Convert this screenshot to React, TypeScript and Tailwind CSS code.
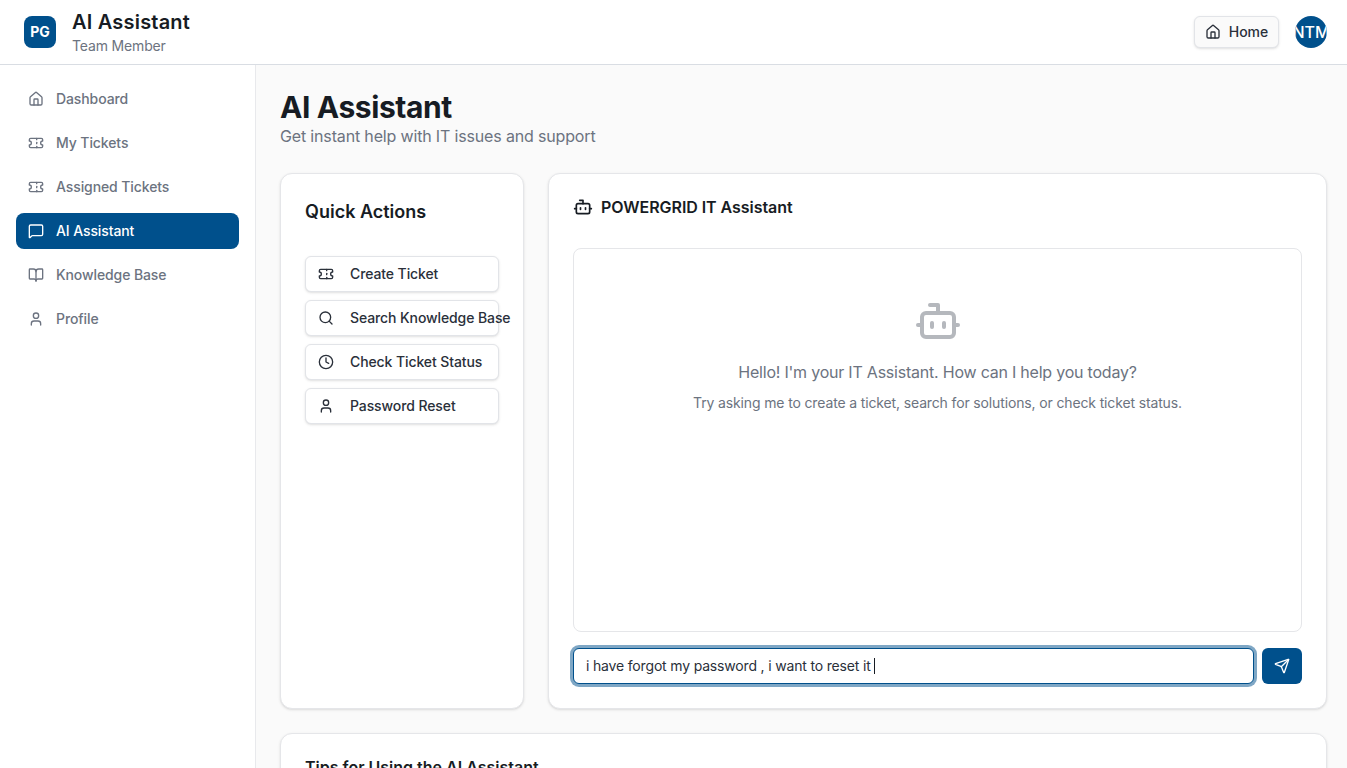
import { Home, Ticket, MessageSquare, BookOpen, User, Search, Clock, Bot, Send } from "lucide-react";

const navItems = [
  { label: "Dashboard", icon: Home },
  { label: "My Tickets", icon: Ticket },
  { label: "Assigned Tickets", icon: Ticket },
  { label: "AI Assistant", icon: MessageSquare, active: true },
  { label: "Knowledge Base", icon: BookOpen },
  { label: "Profile", icon: User },
];

const quickActions = [
  { label: "Create Ticket", icon: Ticket },
  { label: "Search Knowledge Base", icon: Search },
  { label: "Check Ticket Status", icon: Clock },
  { label: "Password Reset", icon: User },
];

export default function App() {
  return (
    <div className="h-screen overflow-hidden flex flex-col bg-[#fafafa] text-[#171c23] font-['Inter',sans-serif]">
      <header className="h-[65px] shrink-0 flex items-center justify-between bg-white border-b border-[#d9dde3] pr-5 pl-6">
        <div className="flex items-center gap-4">
          <div className="w-8 h-8 rounded-lg bg-[#00508c] text-white flex items-center justify-center text-sm font-bold">
            PG
          </div>
          <div>
            <h1 className="text-xl leading-7 font-semibold tracking-[0.2px]">AI Assistant</h1>
            <p className="text-sm leading-5 text-[#6c7380] tracking-[-0.15px]">Team Member</p>
          </div>
        </div>
        <div className="flex items-center gap-4">
          <button className="w-[85px] h-8 flex items-center justify-center gap-2 rounded-md border border-[#e2e4e8] bg-[#fafafa] shadow-sm text-sm font-medium text-[#2a303a]">
            <Home size={16} />
            Home
          </button>
          <div className="w-8 h-8 rounded-full bg-[#00508c] text-white flex items-center justify-center overflow-hidden text-base font-medium whitespace-nowrap">
            NTM
          </div>
        </div>
      </header>

      <div className="flex flex-1 min-h-0">
        <aside className="w-[256px] shrink-0 bg-white border-r border-[#e8e9ec] p-4 flex flex-col gap-2">
          {navItems.map((item) => (
            <div
              key={item.label}
              className={
                item.active
                  ? "h-9 flex items-center gap-3 px-3 rounded-lg bg-[#00508c] text-white text-sm font-medium tracking-[-0.1px]"
                  : "h-9 flex items-center gap-3 px-3 rounded-lg text-[#6c7380] text-sm font-medium tracking-[-0.1px]"
              }
            >
              <item.icon size={16} />
              {item.label}
            </div>
          ))}
        </aside>

        <main className="flex-1 min-w-0 pt-6 pl-6 pr-5">
          <h2 className="text-3xl leading-9 font-bold tracking-[-0.4px]">AI Assistant</h2>
          <p className="text-base leading-[22px] text-[#6c7380] tracking-[-0.16px]">Get instant help with IT issues and support</p>

          <div className="grid grid-cols-[244px_1fr] gap-6 mt-[26px]">
            <div className="h-[536px] rounded-xl border border-[#e5e6e9] bg-white shadow-sm p-6">
              <h3 className="text-lg leading-7 font-semibold">Quick Actions</h3>
              <div className="flex flex-col gap-2 mt-[30px]">
                {quickActions.map((action) => (
                  <button
                    key={action.label}
                    className="w-[194px] h-9 flex items-center gap-4 pl-3 rounded-md border border-[#e2e4e8] bg-white shadow-sm text-sm font-medium text-[#2a303a] whitespace-nowrap tracking-[-0.1px]"
                  >
                    <action.icon size={16} className="shrink-0" />
                    {action.label}
                  </button>
                ))}
              </div>
            </div>

            <div className="h-[536px] rounded-xl border border-[#e5e6e9] bg-white shadow-sm p-6 flex flex-col">
              <div className="flex items-center gap-2 h-5 mt-[-1px] text-base font-semibold tracking-[-0.05px]">
                <Bot size={20} />
                POWERGRID IT Assistant
              </div>
              <div className="h-[384px] mt-[31px] rounded-lg border border-[#e5e6e9] bg-white flex flex-col items-center pt-[48px]">
                <Bot size={48} strokeWidth={2} className="text-[#b5b8bd]" />
                <p className="mt-[15px] text-base leading-6 text-[#6c7380] tracking-[-0.22px]">
                  Hello! I'm your IT Assistant. How can I help you today?
                </p>
                <p className="mt-[9px] text-sm leading-5 text-[#6c7380] tracking-[-0.14px]">
                  Try asking me to create a ticket, search for solutions, or check ticket status.
                </p>
              </div>
              <div className="flex items-center gap-2 mt-4">
                <div className="flex-1 h-9 flex items-center px-3 rounded-md border border-[#00508c] ring-[3px] ring-[#00508c]/50 bg-white text-sm text-[#2a303a] tracking-[-0.17px]">
                  i have forgot my password , i want to reset it
                  <span className="ml-[3px] w-px h-4 bg-[#171c23]" />
                </div>
                <button className="w-10 h-9 flex items-center justify-center rounded-md bg-[#00508c] text-white">
                  <Send size={16} />
                </button>
              </div>
            </div>
          </div>

          <div className="mt-6 rounded-xl border border-[#e5e6e9] bg-white shadow-sm px-6 pt-[21px] pb-6">
            <h3 className="text-base leading-6 font-semibold">Tips for Using the AI Assistant</h3>
          </div>
        </main>
      </div>
    </div>
  );
}
